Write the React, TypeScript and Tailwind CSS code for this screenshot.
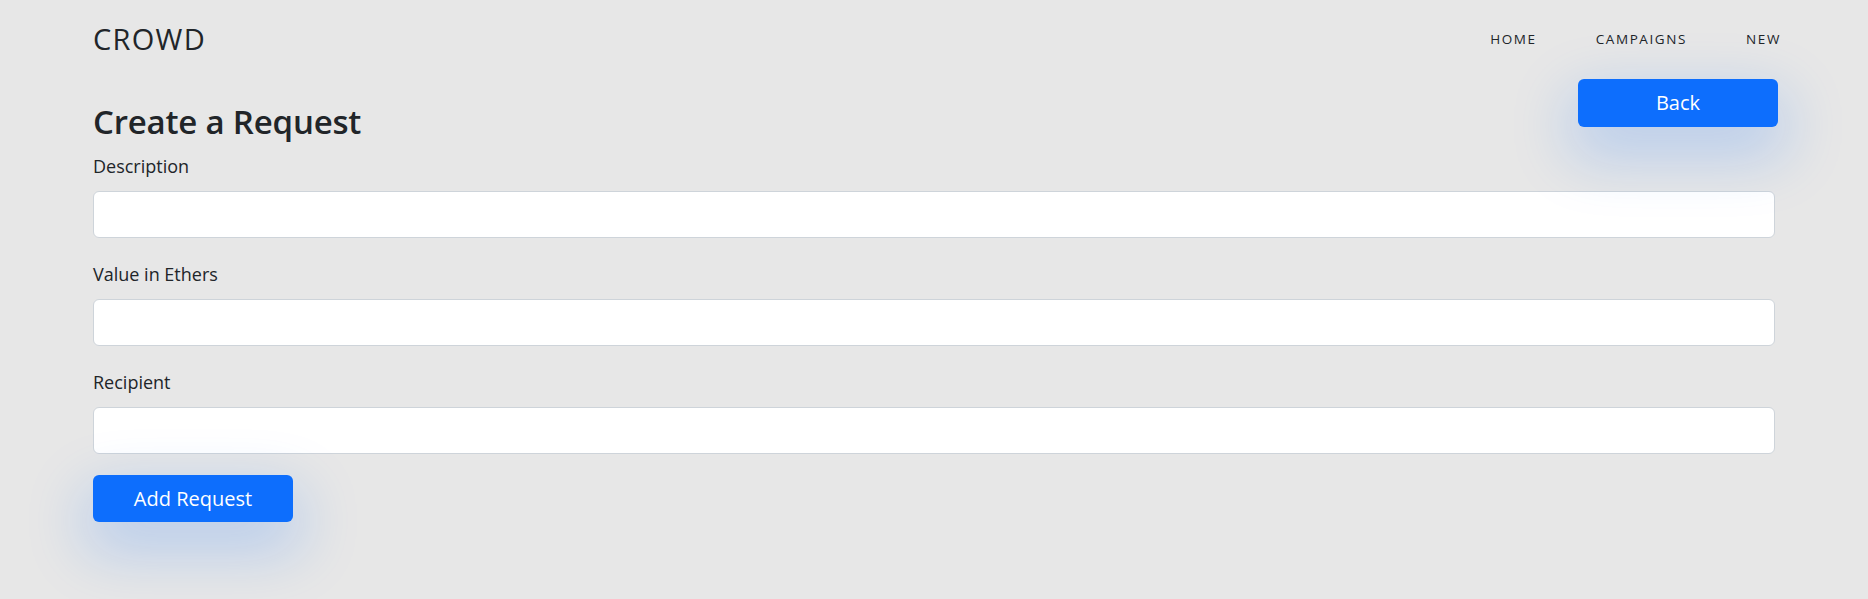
import React from 'react';

const font = { fontFamily: '"Open Sans", "Noto Sans", sans-serif' };

const fields = ['Description', 'Value in Ethers', 'Recipient'];

function Field({ label }: { label: string }) {
  return (
    <div className="mb-[23px]">
      <label className="block text-[18px] leading-[27px] mb-[11px] text-[#212529]">{label}</label>
      <input
        type="text"
        className="block w-full h-[47px] bg-white border border-[#ced4da] rounded-[6px] px-3 outline-none"
      />
    </div>
  );
}

export default function App() {
  return (
    <div className="min-h-[599px] bg-[#e7e7e7] text-[#212529]" style={font}>
      <div className="pl-[93px] pr-[90px]">
        <header className="h-[78px] flex items-center justify-between">
          <div className="text-[29px] tracking-[1.3px] text-[#212529]">CROWD</div>
          <nav className="-mr-[3px] flex items-center gap-[59px] text-[13.5px] tracking-[1.6px] text-[#212529]">
            <a href="#">HOME</a>
            <a href="#">CAMPAIGNS</a>
            <a href="#">NEW</a>
          </nav>
        </header>

        <div className="flex items-start justify-between">
          <h2 className="mt-[24px] text-[33px] leading-[40px] font-semibold tracking-[-0.2px]">Create a Request</h2>
          <button className="mt-[1px] w-[200px] h-[48px] rounded-[6px] bg-[#0d6efd] text-white text-[20px] shadow-[0_22px_60px_8px_rgba(13,110,253,0.22)]">
            Back
          </button>
        </div>

        <form className="mt-[11px] pr-[3px]">
          {fields.map((f) => (
            <Field key={f} label={f} />
          ))}
          <button
            type="button"
            className="-mt-[2px] w-[200px] h-[47px] rounded-[6px] bg-[#0d6efd] text-white text-[20px] shadow-[0_22px_60px_8px_rgba(13,110,253,0.22)]"
          >
            Add Request
          </button>
        </form>
      </div>
    </div>
  );
}
